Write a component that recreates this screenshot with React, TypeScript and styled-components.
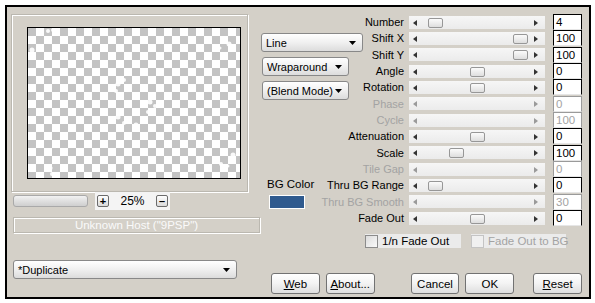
import React from "react";
import styled, { createGlobalStyle } from "styled-components";

const GlobalStyle = createGlobalStyle`
  html, body { margin: 0; padding: 0; background: #fff; }
  body { font-family: "Liberation Sans", Arial, sans-serif; font-size: 11px; color: #000; }
  * { box-sizing: border-box; }
`;

const Frame = styled.div`
  margin: 5px;
  width: 586px;
  height: 294px;
  border: 2px solid #000;
  background: #d4d0c8;
  display: flex;
  padding: 5px 0 0 4px;
`;

const LeftCol = styled.div`
  width: 248px;
  display: flex;
  flex-direction: column;
`;

const Etched = styled.div`
  border: 1px solid #bbb8b0;
  box-shadow: inset 1px 1px 0 #fff, 1px 1px 0 #fff;
`;

const PreviewGroup = styled(Etched)`
  margin-top: 2px;
  width: 237px;
  height: 178px;
  padding: 12px 0 0 15px;
`;

const Checker = styled.div`
  position: relative;
  width: 214px;
  height: 152px;
  border: 1px solid #000;
  background: repeating-conic-gradient(#fff 0% 25%, #c3c3c3 0% 50%) 0 0 / 16px 16px;
`;

const Sparkles = styled.svg`
  position: absolute;
  left: 0;
  top: 0;
`;

const ZoomRow = styled.div`
  height: 18px;
  display: flex;
  align-items: center;
`;

const ZoomBar = styled.div`
  margin-left: 2px;
  width: 75px;
  height: 12px;
  border: 1px solid #a9a9a9;
  border-radius: 3px;
  background: linear-gradient(#f2f2f2, #dcdcdc 60%, #cfcfcf);
`;

const ZoomPanel = styled.div`
  margin-left: 7px;
  width: 75px;
  height: 18px;
  background: #f4f4f4;
  display: flex;
  align-items: center;
  justify-content: space-between;
  padding: 0 2px;
`;

const TinyButton = styled.div`
  width: 12px;
  height: 12px;
  border: 1px solid #6b6b6b;
  border-radius: 2px;
  background: linear-gradient(#fff, #dadada);
  display: flex;
  align-items: center;
  justify-content: center;
  font-weight: bold;
  font-size: 11px;
  line-height: 1;
`;

const ZoomText = styled.span`
  font-size: 12px;
`;

const HostBox = styled(Etched)`
  margin: 7px 0 0 2px;
  width: 247px;
  height: 16px;
  display: flex;
  align-items: center;
  justify-content: center;
  color: #fafafa;
  font-size: 11.5px;
`;

const Select = styled.div<{ $w: number; $ml?: number }>`
  width: ${(p) => p.$w}px;
  margin-left: ${(p) => p.$ml ?? 0}px;
  height: 19px;
  border: 1px solid #888;
  border-radius: 3px;
  background: linear-gradient(#fff, #f0f0f0 50%, #dcdcdc);
  display: flex;
  align-items: center;
  justify-content: space-between;
  padding: 0 6px 0 4px;
  white-space: nowrap;
  flex-shrink: 0;
`;

const DupSelect = styled(Select)`
  margin-top: 27px;
`;

const RightCol = styled.div`
  width: 323px;
  display: flex;
  flex-direction: column;
`;

const SliderGrid = styled.div`
  display: grid;
  grid-template-columns: 104px 41px 149px 29px;
  grid-template-rows: repeat(13, 16.33px);
  margin-top: 2px;
`;

const SideStack = styled.div`
  grid-column: 1;
  grid-row: 2 / 7;
  display: flex;
  flex-direction: column;
  gap: 5px;
  padding-top: 3px;
`;

const ColorBlock = styled.div`
  grid-column: 1;
  grid-row: 11 / 14;
  display: flex;
  flex-direction: column;
  padding-top: 1px;
`;

const ColorLabel = styled.span`
  margin-left: 8px;
  font-size: 11.5px;
  line-height: 13px;
`;

const Swatch = styled.div`
  margin: 4px 0 0 10px;
  width: 36px;
  height: 14px;
  background: #2f5a8e;
  border: 1px solid #fff;
`;

const Label = styled.span<{ $row: number; $off?: boolean }>`
  grid-column: 1 / 3;
  grid-row: ${(p) => p.$row};
  justify-self: end;
  align-self: center;
  white-space: nowrap;
  font-size: 11px;
  color: ${(p) => (p.$off ? "#a3a3a3" : "#000")};
`;

const Track = styled.div<{ $row: number }>`
  grid-column: 3;
  grid-row: ${(p) => p.$row};
  align-self: center;
  position: relative;
  margin: 0 8px 0 5px;
  height: 13px;
  background: linear-gradient(#f6f6f6, #ebebeb);
`;

const Arrow = styled.svg<{ $side: "l" | "r" }>`
  position: absolute;
  top: 4px;
  ${(p) => (p.$side === "l" ? "left: 4px;" : "right: 7px;")}
`;

const Thumb = styled.div`
  position: absolute;
  top: 2px;
  width: 15px;
  height: 10px;
  border: 1px solid #979797;
  border-radius: 2px;
  background: linear-gradient(#fbfbfb, #dedede);
`;

const Value = styled.div<{ $row: number; $off?: boolean }>`
  grid-column: 4;
  grid-row: ${(p) => p.$row};
  align-self: center;
  height: 16px;
  background: #fff;
  border: 1px solid ${(p) => (p.$off ? "#9a9a9a" : "#000")};
  border-bottom-color: #e6e6e6;
  padding: 0 0 0 2px;
  font-size: 11.5px;
  line-height: 14px;
  color: ${(p) => (p.$off ? "#a3a3a3" : "#000")};
`;

const CheckRow = styled.div`
  margin-top: 8px;
  height: 14px;
  display: flex;
  gap: 10px;
  padding-left: 106px;
`;

const CheckItem = styled.div<{ $w: number; $off?: boolean }>`
  width: ${(p) => p.$w}px;
  height: 14px;
  background: #ebebeb;
  display: flex;
  align-items: center;
  gap: 4px;
  white-space: nowrap;
  font-size: 11.5px;
  color: ${(p) => (p.$off ? "#a3a3a3" : "#000")};
`;

const Box = styled.span<{ $off?: boolean }>`
  flex-shrink: 0;
  width: 13px;
  height: 13px;
  border: 1px solid ${(p) => (p.$off ? "#c4c4c4" : "#8c8c8c")};
  background: ${(p) => (p.$off ? "#f0f0f0" : "linear-gradient(135deg, #dcdcdc, #fafafa)")};
`;

const ButtonRow = styled.div`
  margin-top: 25px;
  display: flex;
  padding-left: 12px;
`;

const Button = styled.div<{ $ml: number }>`
  margin-left: ${(p) => p.$ml}px;
  width: 49px;
  height: 21px;
  border: 1px solid #727272;
  border-radius: 3px;
  background: linear-gradient(#fff, #f3f3f3 50%, #dedede);
  display: flex;
  align-items: center;
  justify-content: center;
  font-size: 11.5px;
  & u { text-decoration: underline; }
`;

function DownArrow() {
  return (
    <svg width="7" height="4" viewBox="0 0 7 4">
      <polygon points="0,0 7,0 3.5,4" fill="#000" />
    </svg>
  );
}

type Slider = { label: string; value: string; thumb?: number; off?: boolean };

const SLIDERS: Slider[] = [
  { label: "Number", value: "4", thumb: 19 },
  { label: "Shift X", value: "100", thumb: 104 },
  { label: "Shift Y", value: "100", thumb: 104 },
  { label: "Angle", value: "0", thumb: 61 },
  { label: "Rotation", value: "0", thumb: 61 },
  { label: "Phase", value: "0", off: true },
  { label: "Cycle", value: "100", off: true },
  { label: "Attenuation", value: "0", thumb: 61 },
  { label: "Scale", value: "100", thumb: 40 },
  { label: "Tile Gap", value: "0", off: true },
  { label: "Thru BG Range", value: "0", thumb: 19 },
  { label: "Thru BG Smooth", value: "30", off: true },
  { label: "Fade Out", value: "0", thumb: 61 },
];

// faint white specks from the effect preview, relative to the checker box
const SPECKS: [number, number, number][] = [
  [13, 2, 2.5], [20, 3, 2], [25, 2, 2], [20, 12, 2.5], [4, 22, 2.5],
  [196, 10, 2], [201, 16, 2.5], [206, 22, 2], [192, 20, 1.5],
  [90, 56, 2.5], [96, 52, 2], [100, 61, 2], [88, 63, 2],
  [122, 74, 2.5], [127, 78, 2], [120, 84, 2], [125, 86, 1.5],
  [90, 89, 2.5], [96, 95, 2], [108, 97, 2.5], [101, 91, 1.5],
  [22, 140, 2.5], [24, 146, 2], [205, 127, 2.5], [193, 136, 2], [200, 138, 1.5],
];

export default function App() {
  return (
    <>
      <GlobalStyle />
      <Frame>
        <LeftCol>
          <PreviewGroup>
            <Checker>
              <Sparkles width="212" height="150" viewBox="0 0 212 150">
                {SPECKS.map(([x, y, r], i) => (
                  <circle key={i} cx={x} cy={y} r={r} fill="#fff" opacity={0.9} />
                ))}
              </Sparkles>
            </Checker>
          </PreviewGroup>
          <ZoomRow>
            <ZoomBar />
            <ZoomPanel>
              <TinyButton>+</TinyButton>
              <ZoomText>25%</ZoomText>
              <TinyButton>–</TinyButton>
            </ZoomPanel>
          </ZoomRow>
          <HostBox>Unknown Host ("9PSP")</HostBox>
          <DupSelect $w={224} $ml={2}>
            <span>*Duplicate</span>
            <DownArrow />
          </DupSelect>
        </LeftCol>

        <RightCol>
          <SliderGrid>
            <SideStack>
              <Select $w={102} $ml={2}>
                <span>Line</span>
                <DownArrow />
              </Select>
              <Select $w={87} $ml={3}>
                <span>Wraparound</span>
                <DownArrow />
              </Select>
              <Select $w={87} $ml={3}>
                <span>(Blend Mode)</span>
                <DownArrow />
              </Select>
            </SideStack>
            <ColorBlock>
              <ColorLabel>BG Color</ColorLabel>
              <Swatch />
            </ColorBlock>
            {SLIDERS.map((s, i) => (
              <React.Fragment key={s.label}>
                <Label $row={i + 1} $off={s.off}>{s.label}</Label>
                <Track $row={i + 1}>
                  <Arrow $side="l" width="4" height="6" viewBox="0 0 4 6">
                    <polygon points="4,0 4,6 0,3" fill={s.off ? "#9a9a9a" : "#333"} />
                  </Arrow>
                  <Arrow $side="r" width="4" height="6" viewBox="0 0 4 6">
                    <polygon points="0,0 0,6 4,3" fill={s.off ? "#9a9a9a" : "#333"} />
                  </Arrow>
                  {s.thumb !== undefined && <Thumb style={{ left: s.thumb }} />}
                </Track>
                <Value $row={i + 1} $off={s.off}>{s.value}</Value>
              </React.Fragment>
            ))}
          </SliderGrid>
          <CheckRow>
            <CheckItem $w={96}>
              <Box />
              <span>1/n Fade Out</span>
            </CheckItem>
            <CheckItem $w={95} $off>
              <Box $off />
              <span>Fade Out to BG</span>
            </CheckItem>
          </CheckRow>
          <ButtonRow>
            <Button $ml={0}><span><u>W</u>eb</span></Button>
            <Button $ml={6}><span><u>A</u>bout...</span></Button>
            <Button $ml={36}>Cancel</Button>
            <Button $ml={6}>OK</Button>
            <Button $ml={19}><span><u>R</u>eset</span></Button>
          </ButtonRow>
        </RightCol>
      </Frame>
    </>
  );
}
